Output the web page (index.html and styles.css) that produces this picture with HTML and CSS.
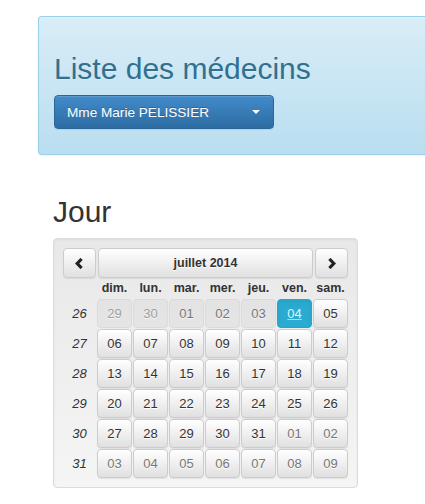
FILE: index.html
```html
<!DOCTYPE html>
<html lang="fr">
<head>
<meta charset="utf-8">
<title>Liste des médecins</title>
<link rel="stylesheet" href="styles.css">
</head>
<body>
<div class="jumbo">
  <h1 class="jumbo-title">Liste des médecins</h1>
  <button class="btn-primary" type="button">
    <span>Mme Marie PELISSIER</span>
    <span class="caret"></span>
  </button>
</div>

<div class="content">
  <h2 class="section-title">Jour</h2>
  <div class="well">
    <div class="cal-head">
      <button class="btn nav" type="button" aria-label="Mois précédent">
        <svg width="9" height="11" viewBox="0 0 9 11"><polyline points="6.6,1 2.2,5.5 6.6,10" fill="none" stroke="#222" stroke-width="3.2" stroke-linejoin="miter"/></svg>
      </button>
      <button class="btn month" type="button">juillet 2014</button>
      <button class="btn nav" type="button" aria-label="Mois suivant">
        <svg width="9" height="11" viewBox="0 0 9 11"><polyline points="2.4,1 6.8,5.5 2.4,10" fill="none" stroke="#222" stroke-width="3.2" stroke-linejoin="miter"/></svg>
      </button>
    </div>
    <div class="cal-grid">
      <span></span>
      <span class="dow">dim.</span><span class="dow">lun.</span><span class="dow">mar.</span><span class="dow">mer.</span><span class="dow">jeu.</span><span class="dow">ven.</span><span class="dow">sam.</span>

      <span class="wk">26</span>
      <button class="btn day disabled muted">29</button><button class="btn day disabled muted">30</button><button class="btn day disabled">01</button><button class="btn day disabled">02</button><button class="btn day disabled">03</button><button class="btn day active">04</button><button class="btn day">05</button>

      <span class="wk">27</span>
      <button class="btn day">06</button><button class="btn day">07</button><button class="btn day">08</button><button class="btn day">09</button><button class="btn day">10</button><button class="btn day">11</button><button class="btn day">12</button>

      <span class="wk">28</span>
      <button class="btn day">13</button><button class="btn day">14</button><button class="btn day">15</button><button class="btn day">16</button><button class="btn day">17</button><button class="btn day">18</button><button class="btn day">19</button>

      <span class="wk">29</span>
      <button class="btn day">20</button><button class="btn day">21</button><button class="btn day">22</button><button class="btn day">23</button><button class="btn day">24</button><button class="btn day">25</button><button class="btn day">26</button>

      <span class="wk">30</span>
      <button class="btn day">27</button><button class="btn day">28</button><button class="btn day">29</button><button class="btn day">30</button><button class="btn day">31</button><button class="btn day muted">01</button><button class="btn day muted">02</button>

      <span class="wk">31</span>
      <button class="btn day muted">03</button><button class="btn day muted">04</button><button class="btn day muted">05</button><button class="btn day muted">06</button><button class="btn day muted">07</button><button class="btn day muted">08</button><button class="btn day muted">09</button>
    </div>
  </div>
</div>
</body>
</html>
```

FILE: styles.css
```css
html, body {
  margin: 0;
  padding: 0;
  background: #fff;
  font-family: "Liberation Sans", Arial, sans-serif;
  color: #333;
}

.jumbo {
  margin: 16px 0 0 38px;
  padding: 35px 15px 25px 15px;
  border: 1px solid #9acfea;
  border-right: 0;
  border-radius: 4px 0 0 4px;
  background: linear-gradient(to bottom, #d9edf7 0%, #b9def0 100%);
  box-shadow: inset 0 1px 0 rgba(255,255,255,.25), 0 1px 2px rgba(0,0,0,.05);
}

.jumbo-title {
  margin: 0 0 10px 0;
  font-size: 30px;
  font-weight: normal;
  line-height: 33px;
  color: #31708f;
  text-shadow: 0 1px 0 rgba(255,255,255,.2);
}

.btn-primary {
  display: flex;
  align-items: center;
  justify-content: space-between;
  box-sizing: border-box;
  width: 220px;
  height: 34px;
  padding: 0 13px 0 12px;
  border: 1px solid #2b669a;
  border-radius: 4px;
  background: linear-gradient(to bottom, #428bca 0%, #2d6ca2 100%);
  box-shadow: inset 0 1px 0 rgba(255,255,255,.15), 0 1px 1px rgba(0,0,0,.075);
  color: #fff;
  font-family: "Liberation Sans", Arial, sans-serif;
  font-size: 13.6px;
  text-shadow: 0 -1px 0 rgba(0,0,0,.2);
}

.caret {
  width: 0;
  height: 0;
  border-top: 4px solid #fff;
  border-left: 4px solid transparent;
  border-right: 4px solid transparent;
}

.content {
  padding: 40px 0 0 53px;
}

.section-title {
  margin: 0 0 10px 0;
  font-size: 30px;
  font-weight: normal;
  line-height: 33px;
  color: #333;
}

.well {
  box-sizing: border-box;
  width: 305px;
  padding: 9px;
  border: 1px solid #dcdcdc;
  border-radius: 4px;
  background: linear-gradient(to bottom, #e8e8e8 0%, #f5f5f5 100%);
  box-shadow: inset 0 1px 3px rgba(0,0,0,.05), 0 1px 0 rgba(255,255,255,.1);
}

.btn {
  box-sizing: border-box;
  margin: 0;
  padding: 0;
  border: 1px solid #ccc;
  border-radius: 4px;
  background: linear-gradient(to bottom, #ffffff 0%, #e0e0e0 100%);
  box-shadow: inset 0 1px 0 rgba(255,255,255,.15), 0 1px 1px rgba(0,0,0,.075);
  color: #333;
  font-family: "Liberation Sans", Arial, sans-serif;
  text-shadow: 0 1px 0 #fff;
  display: flex;
  align-items: center;
  justify-content: center;
}

.cal-head {
  display: grid;
  grid-template-columns: 33px 1fr 33px;
  column-gap: 2px;
  height: 30px;
}

.month {
  font-size: 12.5px;
  font-weight: bold;
}

.cal-grid {
  display: grid;
  grid-template-columns: 33px repeat(7, 35px);
  grid-template-rows: 20px repeat(6, 29px);
  column-gap: 1px;
  row-gap: 1px;
}

.dow {
  font-size: 12.5px;
  font-weight: bold;
  text-align: center;
  line-height: 20px;
}

.wk {
  font-size: 13px;
  font-style: italic;
  text-align: center;
  line-height: 29px;
}

.day {
  font-size: 13px;
  width: 35px;
  height: 29px;
}

.day.muted {
  color: #777;
}

.day.disabled {
  background: #e0e0e0;
  border-color: #d2d2d2;
  box-shadow: none;
  opacity: .65;
}

.day.active {
  background: #2aabd2;
  border-color: #28a4c9;
  color: #e4f3f9;
  text-shadow: none;
  text-decoration: underline;
  text-decoration-color: rgba(255,255,255,.6);
  box-shadow: inset 0 3px 5px rgba(0,0,0,.05);
}
```
